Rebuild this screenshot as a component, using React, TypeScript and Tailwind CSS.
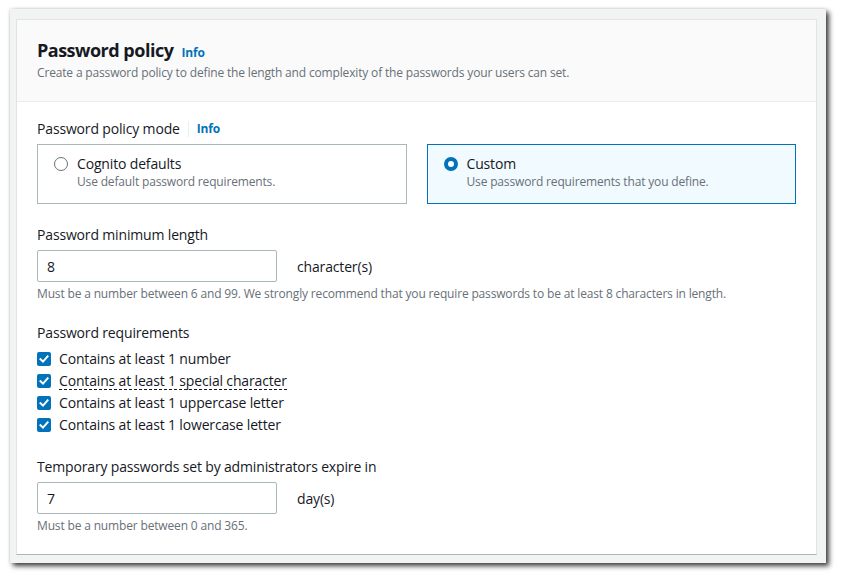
import React from "react";

function Radio({ checked }: { checked: boolean }) {
  return checked ? (
    <span className="mt-[3px] box-border inline-block h-[14px] w-[14px] shrink-0 rounded-full border-[4px] border-[#0073bb] bg-white" />
  ) : (
    <span className="mt-[3px] box-border inline-block h-[14px] w-[14px] shrink-0 rounded-full border-[1.5px] border-[#687078] bg-white" />
  );
}

function Check() {
  return (
    <span className="flex h-[14px] w-[14px] shrink-0 items-center justify-center rounded-[2px] bg-[#0073bb]">
      <svg width="10" height="10" viewBox="0 0 10 10" fill="none">
        <path d="M1.5 5.2 L4 7.6 L8.6 2.4" stroke="white" strokeWidth="2" strokeLinecap="square" />
      </svg>
    </span>
  );
}

function Tile({ checked, title, desc }: { checked: boolean; title: string; desc: string }) {
  return (
    <div
      className={
        checked
          ? "flex h-[60px] w-[370px] gap-[9px] border border-[#0073bb] bg-[#f1faff] pl-[16px] pt-[9px]"
          : "flex h-[60px] w-[370px] gap-[9px] border border-[#aab7b8] bg-white pl-[16px] pt-[9px]"
      }
    >
      <Radio checked={checked} />
      <div className="flex flex-col">
        <span className="text-[14px] leading-[20px] text-[#16191f]">{title}</span>
        <span className="text-[12px] leading-[16px] text-[#687078]">{desc}</span>
      </div>
    </div>
  );
}

function NumInput({ value, unit }: { value: string; unit: string }) {
  return (
    <div className="mt-[5px] flex items-center gap-[20px]">
      <div className="flex h-[32px] w-[240px] items-center rounded-[2px] border border-[#aab7b8] bg-white pl-[9px] text-[14px] text-[#16191f]">
        {value}
      </div>
      <span className="text-[14px] text-[#16191f]">{unit}</span>
    </div>
  );
}

export default function App() {
  const reqs = [
    "Contains at least 1 number",
    "Contains at least 1 special character",
    "Contains at least 1 uppercase letter",
    "Contains at least 1 lowercase letter",
  ];
  return (
    <div
      className="h-[581px] w-[844px] bg-white pl-[10px] pt-[9px] tracking-[-0.01em]"
      style={{ fontFamily: '"Open Sans", sans-serif' }}
    >
      <div className="h-[554px] w-[816px] bg-[#f2f3f3] pl-[6px] pt-[10px] shadow-[0_0_3px_rgba(0,0,0,0.15),3px_3px_5px_rgba(0,0,0,0.75)]">
        <div className="h-[536px] w-[801px] border border-[#e1e4e4] border-b-[#aab7b8] bg-white">
          <div className="h-[82px] border-b border-[#eaeded] bg-[#fafafa] pl-[20px] pt-[19px]">
            <div className="flex items-baseline gap-[8px]">
              <span className="text-[18px] font-bold leading-[22px] tracking-[-0.5px] text-[#16191f]">Password policy</span>
              <span className="text-[12px] font-bold text-[#0073bb]">Info</span>
            </div>
            <div className="mt-[3px] text-[12px] leading-[16px] text-[#687078]">
              Create a password policy to define the length and complexity of the passwords your users can set.
            </div>
          </div>
          <div className="px-[20px] pt-[17px]">
            <div className="flex h-[20px] items-center">
              <span className="text-[14px] leading-[20px] text-[#16191f]">Password policy mode</span>
              <span className="ml-[8px] h-[16px] w-px bg-[#eaeded]" />
              <span className="ml-[8px] text-[12px] font-bold text-[#0073bb]">Info</span>
            </div>
            <div className="mt-[5px] flex gap-[20px]">
              <Tile checked={false} title="Cognito defaults" desc="Use default password requirements." />
              <Tile checked={true} title="Custom" desc="Use password requirements that you define." />
            </div>

            <div className="mt-[21px] text-[14px] leading-[20px] text-[#16191f]">Password minimum length</div>
            <NumInput value="8" unit="character(s)" />
            <div className="mt-[4px] text-[12px] leading-[16px] text-[#687078]">
              Must be a number between 6 and 99. We strongly recommend that you require passwords to be at least 8
              characters in length.
            </div>

            <div className="mt-[21px] text-[14px] leading-[20px] text-[#16191f]">Password requirements</div>
            <div className="mt-[5px] flex flex-col">
              {reqs.map((r, i) => (
                <div key={r} className="flex h-[22px] items-center gap-[8px]">
                  <Check />
                  {i === 1 ? (
                    <span className="border-b border-dashed border-[#16191f] text-[14px] leading-[17px] text-[#16191f]">
                      {r}
                    </span>
                  ) : (
                    <span className="text-[14px] leading-[20px] text-[#16191f]">{r}</span>
                  )}
                </div>
              ))}
            </div>

            <div className="mt-[21px] text-[14px] leading-[20px] text-[#16191f]">
              Temporary passwords set by administrators expire in
            </div>
            <NumInput value="7" unit="day(s)" />
            <div className="mt-[4px] text-[12px] leading-[16px] text-[#687078]">Must be a number between 0 and 365.</div>
          </div>
        </div>
      </div>
    </div>
  );
}
